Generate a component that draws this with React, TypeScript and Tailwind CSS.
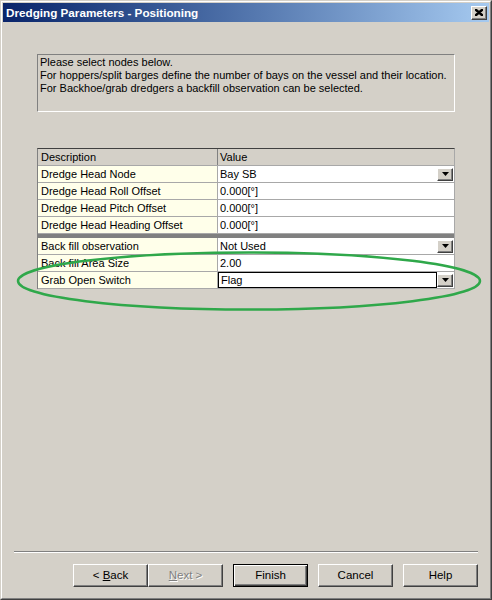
const rows1 = [
  { label: "Dredge Head Node", value: "Bay SB", combo: true },
  { label: "Dredge Head Roll Offset", value: "0.000[°]" },
  { label: "Dredge Head Pitch Offset", value: "0.000[°]" },
  { label: "Dredge Head Heading Offset", value: "0.000[°]" },
];

const rows2 = [
  { label: "Back fill observation", value: "Not Used", combo: true },
  { label: "Back fill Area Size", value: "2.00" },
  { label: "Grab Open Switch", value: "Flag", combo: true, focused: true },
];

function DropButton() {
  return (
    <div className="mr-[1px] flex h-[13px] w-[16px] shrink-0 items-center justify-center border border-t-[#ffffff] border-l-[#ffffff] border-r-[#404040] border-b-[#404040] bg-[#d4d0c8] shadow-[inset_-1px_-1px_0_#808080]">
      <svg width="7" height="4" viewBox="0 0 7 4">
        <path d="M0 0h7L3.5 4z" fill="#000" />
      </svg>
    </div>
  );
}

type Row = { label: string; value: string; combo?: boolean; focused?: boolean };

function TableRow({ row }: { row: Row }) {
  return (
    <div className="flex h-[17px] border-b border-[#a8a8a8]">
      <div className="w-[180px] shrink-0 border-r border-[#a8a8a8] bg-[#ffffea] pl-[3px] leading-[16px]">
        {row.label}
      </div>
      <div className="flex flex-1 items-center bg-white">
        {row.focused ? (
          <div className="h-[16px] flex-1 border border-black pl-[2px] leading-[14px]">{row.value}</div>
        ) : (
          <div className="flex-1 pl-[2px] leading-[16px]">{row.value}</div>
        )}
        {row.combo && <DropButton />}
      </div>
    </div>
  );
}

function Btn({
  children,
  primary,
  disabled,
  className = "",
}: {
  children: React.ReactNode;
  primary?: boolean;
  disabled?: boolean;
  className?: string;
}) {
  const base = "flex h-[23px] w-[75px] items-center justify-center bg-[#d4d0c8] text-[11.5px] ";
  const frame = primary
    ? "border border-black shadow-[inset_1px_1px_0_#ffffff,inset_-1px_-1px_0_#404040,inset_-2px_-2px_0_#808080]"
    : "border border-t-[#ffffff] border-l-[#ffffff] border-r-[#404040] border-b-[#404040] shadow-[inset_-1px_-1px_0_#808080]";
  const text = disabled ? " text-[#808080] [text-shadow:1px_1px_0_#ffffff]" : " text-black";
  return (
    <div className={base + frame + text + " " + className}>
      <span className="whitespace-pre">{children}</span>
    </div>
  );
}

export default function App() {
  return (
    <div className="relative h-[600px] w-[492px] border border-t-[#d4d0c8] border-l-[#d4d0c8] border-r-[#404040] border-b-[#404040] bg-[#d4d0c8] font-['Liberation_Sans',Arial,sans-serif] text-[11px] text-black">
      <div className="flex h-full flex-col border border-t-white border-l-white border-r-[#808080] border-b-[#808080]">
        <div className="mx-[1px] mt-[1px] flex h-[19px] items-center justify-between bg-gradient-to-r from-[#0a246a] to-[#a6caf0] pl-[3px] pr-[2px]">
          <span className="text-[11.7px] font-bold text-white">Dredging Parameters - Positioning</span>
          <div className="flex h-[14px] w-[16px] items-center justify-center border border-t-white border-l-white border-r-[#404040] border-b-[#404040] bg-[#d4d0c8] shadow-[inset_-1px_-1px_0_#808080]">
            <svg width="8" height="7" viewBox="0 0 8 7">
              <path d="M0 0l8 7M1 0l7 6M0 1l7 6M8 0L0 7M7 0L0 6M8 1L1 7" stroke="#000" strokeWidth="1.1" />
            </svg>
          </div>
        </div>

        <div className="ml-[35px] mt-[32px] h-[58px] w-[418px] border border-t-[#808080] border-l-[#808080] border-r-white border-b-white pl-[2px] pt-[1px] leading-[13px]">
          <div>Please select nodes below.</div>
          <div>For hoppers/split barges define the number of bays on the vessel and their location.</div>
          <div>For Backhoe/grab dredgers a backfill observation can be selected.</div>
        </div>

        <div className="ml-[35px] mt-[36px] w-[418px] border-t border-l border-r border-t-[#404040] border-l-[#808080] border-r-[#a8a8a8] text-[11px]">
          <div className="flex h-[17px] border-b border-[#a8a8a8] bg-[#d4d0c8]">
            <div className="w-[180px] shrink-0 border-r border-[#808080] pl-[3px] leading-[16px]">Description</div>
            <div className="flex-1 pl-[2px] leading-[16px]">Value</div>
          </div>
          {rows1.map((r) => (
            <TableRow key={r.label} row={r} />
          ))}
          <div className="h-[4px] bg-[#808080]" />
          {rows2.map((r) => (
            <TableRow key={r.label} row={r} />
          ))}
        </div>

        <div className="flex-1" />

        <div className="ml-[12px] w-[464px] border-t border-b border-t-[#808080] border-b-white" />

        <div className="mb-[11px] ml-[71px] mt-[11px] flex">
          <Btn>
            {"< "}
            <span className="underline">B</span>ack
          </Btn>
          <Btn disabled>
            <span className="underline">N</span>
            {"ext >"}
          </Btn>
          <Btn primary className="ml-[10px]">
            Finish
          </Btn>
          <Btn className="ml-[10px]">Cancel</Btn>
          <Btn className="ml-[10px]">Help</Btn>
        </div>
      </div>

      <svg className="pointer-events-none absolute left-0 top-0" width="492" height="600">
        <ellipse cx="248" cy="280" rx="231" ry="28.5" fill="none" stroke="#2fa84a" strokeWidth="2.5" />
      </svg>
    </div>
  );
}
